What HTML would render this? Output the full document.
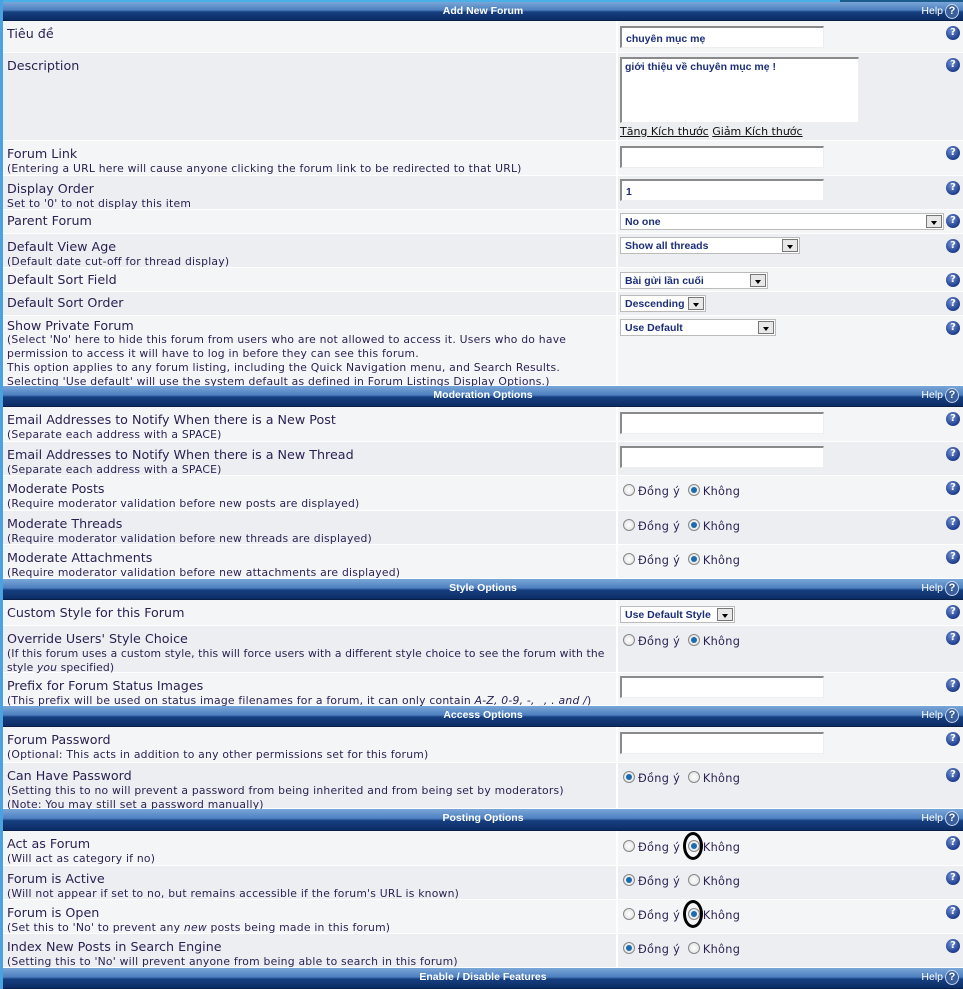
<!DOCTYPE html>
<html><head><meta charset="utf-8"><style>
*{margin:0;padding:0;box-sizing:border-box}
body{width:963px;height:989px;position:relative;overflow:hidden;background:#fff;font-family:"DejaVu Sans","Liberation Sans",sans-serif;color:#2a1f50}
.edge{position:absolute;left:0;top:0;width:3px;height:989px;background:#4aa3e0}
.topb{position:absolute;left:0;top:0;width:963px;height:3px;background:#4ab0e8}
.topd{position:absolute;left:840px;top:0;width:123px;height:3px;background:#1b5c8c}
.h{position:absolute;left:3px;width:960px;background:linear-gradient(#7aa7d8,#4e7fbf 45%,#163f80 55%,#0c2d66);border-bottom:1px solid #0a1f45;color:#fff;font-weight:bold;font-size:10.5px;font-family:"Liberation Sans",sans-serif;text-align:center;line-height:19px}
.h .hp{position:absolute;right:4px;top:0;font-weight:normal;font-size:10.5px}
.h .hp i{display:inline-block;width:14px;height:15px;border-radius:50%;background:#3a5f9c;border:1px solid #c5d6ee;vertical-align:middle;color:#fff;font-style:normal;font-weight:bold;font-size:11px;line-height:13px;text-align:center;margin-left:2px}
.r{position:absolute;left:3px;width:960px;border-bottom:1px solid #fff}
.a{background:#f4f5f7}.b{background:#eceef1}
.r .sep{position:absolute;left:613px;top:0;bottom:0;width:2px;background:#fff}
.t{position:absolute;left:4px;top:6px;font-size:12.7px;line-height:14px;white-space:nowrap}
.s{font-size:10.8px;line-height:12px;letter-spacing:.22px}
.q{position:absolute;left:943px;top:5px;width:14px;height:14px;border-radius:50%;background:radial-gradient(circle at 40% 35%,#6f8fd0,#1e3d8e 70%);color:#fff;font-size:10px;font-weight:bold;text-align:center;line-height:14px}
.in{position:absolute;left:617px;top:5px;width:204px;height:22px;background:#fff;border-top:2px solid #8a8a8a;border-left:2px solid #8a8a8a;border-right:1px solid #eee;border-bottom:1px solid #eee;font-size:10.5px;font-family:"Liberation Sans",sans-serif;font-weight:bold;color:#1c2e78;padding:5px 4px}
.sel{position:absolute;left:617px;top:4px;height:17px;background:#fff;border:1px solid #bbb;font-size:10.5px;font-family:"Liberation Sans",sans-serif;font-weight:bold;color:#1c2e78;padding:2px 4px;line-height:12px;white-space:nowrap}
.sel b{position:absolute;right:1px;top:1px;width:16px;height:13px;background:#e8e8e8;border:1px solid #777}
.sel b:after{content:"";position:absolute;left:4px;top:5px;border:3px solid transparent;border-top:4px solid #000}
.rad{position:absolute;left:620px;top:8px;font-size:11.3px;white-space:nowrap;color:#2a1f50;letter-spacing:.3px}
.rd{display:inline-block;width:12px;height:12px;border-radius:50%;border:1px solid #888;background:radial-gradient(#fff,#ddd);vertical-align:-1px;margin-right:3px;position:relative}
.rd.on:after{content:"";position:absolute;left:2px;top:2px;width:6px;height:6px;border-radius:50%;background:#1a6bb0}
.ell{position:absolute;width:20px;height:28px;border:3px solid #000;border-radius:50%}
.lk{position:absolute;left:617px;top:72px;font-size:11px;font-family:"DejaVu Sans",sans-serif;color:#111;white-space:nowrap}
.lk span{text-decoration:underline}
</style></head><body>
<div class="topb"></div><div class="topd"></div>

<div class="h" style="top:2px;height:19px">Add New Forum<span class="hp">Help<i>?</i></span></div>

<div class="r a" style="top:21px;height:32px"><div class="sep"></div><div class="t">Tiêu đề</div><div class="in" style="top:5px">chuyên mục mẹ</div><div class="q">?</div></div>
<div class="r b" style="top:53px;height:88px"><div class="sep"></div><div class="t">Description</div>
<div class="in" style="top:4px;width:239px;height:66px;padding:2px 3px">giới thiệu về chuyên mục mẹ !</div>
<div class="lk"><span>Tăng Kích thước</span> <span>Giảm Kích thước</span></div><div class="q">?</div></div>
<div class="r a" style="top:141px;height:35px"><div class="sep"></div><div class="t">Forum Link<br><span class="s">(Entering a URL here will cause anyone clicking the forum link to be redirected to that URL)</span></div><div class="in"></div><div class="q">?</div></div>
<div class="r b" style="top:176px;height:34px"><div class="sep"></div><div class="t">Display Order<br><span class="s">Set to '0' to not display this item</span></div><div class="in" style="top:3px">1</div><div class="q">?</div></div>
<div class="r a" style="top:210px;height:24px"><div class="sep"></div><div class="t" style="top:4px">Parent Forum</div><div class="sel" style="width:324px;top:3px">No one<b></b></div><div class="q" style="top:4px">?</div></div>
<div class="r b" style="top:234px;height:34px"><div class="sep"></div><div class="t">Default View Age<br><span class="s">(Default date cut-off for thread display)</span></div><div class="sel" style="width:180px;top:3px">Show all threads<b></b></div><div class="q">?</div></div>
<div class="r a" style="top:268px;height:24px"><div class="sep"></div><div class="t" style="top:5px">Default Sort Field</div><div class="sel" style="width:148px;top:4px">Bài gửi lần cuối<b></b></div><div class="q">?</div></div>
<div class="r b" style="top:292px;height:24px"><div class="sep"></div><div class="t" style="top:4px">Default Sort Order</div><div class="sel" style="width:86px;top:3px">Descending<b></b></div><div class="q">?</div></div>
<div class="r a" style="top:316px;height:70px"><div class="sep"></div><div class="t" style="top:3px;line-height:13px">Show Private Forum<br><span class="s">(Select 'No' here to hide this forum from users who are not allowed to access it. Users who do have<br>permission to access it will have to log in before they can see this forum.<br>This option applies to any forum listing, including the Quick Navigation menu, and Search Results.<br>Selecting 'Use default' will use the system default as defined in Forum Listings Display Options.)</span></div><div class="sel" style="width:156px;top:3px">Use Default<b></b></div><div class="q">?</div></div>

<div class="h" style="top:386px;height:21px">Moderation Options<span class="hp">Help<i>?</i></span></div>

<div class="r a" style="top:407px;height:35px"><div class="sep"></div><div class="t">Email Addresses to Notify When there is a New Post<br><span class="s">(Separate each address with a SPACE)</span></div><div class="in"></div><div class="q">?</div></div>
<div class="r b" style="top:442px;height:34px"><div class="sep"></div><div class="t">Email Addresses to Notify When there is a New Thread<br><span class="s">(Separate each address with a SPACE)</span></div><div class="in" style="top:4px"></div><div class="q">?</div></div>
<div class="r a" style="top:476px;height:35px"><div class="sep"></div><div class="t">Moderate Posts<br><span class="s">(Require moderator validation before new posts are displayed)</span></div><div class="rad"><span class="rd"></span>Đồng ý &nbsp;<span class="rd on"></span>Không</div><div class="q">?</div></div>
<div class="r b" style="top:511px;height:34px"><div class="sep"></div><div class="t">Moderate Threads<br><span class="s">(Require moderator validation before new threads are displayed)</span></div><div class="rad"><span class="rd"></span>Đồng ý &nbsp;<span class="rd on"></span>Không</div><div class="q">?</div></div>
<div class="r a" style="top:545px;height:34px"><div class="sep"></div><div class="t">Moderate Attachments<br><span class="s">(Require moderator validation before new attachments are displayed)</span></div><div class="rad"><span class="rd"></span>Đồng ý &nbsp;<span class="rd on"></span>Không</div><div class="q">?</div></div>

<div class="h" style="top:579px;height:21px">Style Options<span class="hp">Help<i>?</i></span></div>

<div class="r a" style="top:600px;height:26px"><div class="sep"></div><div class="t" style="top:6px">Custom Style for this Forum</div><div class="sel" style="width:115px;top:6px">Use Default Style<b></b></div><div class="q">?</div></div>
<div class="r b" style="top:626px;height:47px"><div class="sep"></div><div class="t">Override Users' Style Choice<br><span class="s" style="letter-spacing:.1px">(If this forum uses a custom style, this will force users with a different style choice to see the forum with the<br>style <i>you</i> specified)</span></div><div class="rad"><span class="rd"></span>Đồng ý &nbsp;<span class="rd on"></span>Không</div><div class="q">?</div></div>
<div class="r a" style="top:673px;height:33px"><div class="sep"></div><div class="t">Prefix for Forum Status Images<br><span class="s">(This prefix will be used on status image filenames for a forum, it can only contain <i>A-Z, 0-9, -, _, . and /</i>)</span></div><div class="in" style="top:3px"></div><div class="q">?</div></div>

<div class="h" style="top:706px;height:21px">Access Options<span class="hp">Help<i>?</i></span></div>

<div class="r a" style="top:727px;height:36px"><div class="sep"></div><div class="t">Forum Password<br><span class="s">(Optional: This acts in addition to any other permissions set for this forum)</span></div><div class="in"></div><div class="q">?</div></div>
<div class="r b" style="top:763px;height:46px"><div class="sep"></div><div class="t">Can Have Password<br><span class="s">(Setting this to no will prevent a password from being inherited and from being set by moderators)<br>(Note: You may still set a password manually)</span></div><div class="rad"><span class="rd on"></span>Đồng ý &nbsp;<span class="rd"></span>Không</div><div class="q">?</div></div>

<div class="h" style="top:809px;height:22px">Posting Options<span class="hp">Help<i>?</i></span></div>

<div class="r a" style="top:831px;height:35px"><div class="sep"></div><div class="t">Act as Forum<br><span class="s">(Will act as category if no)</span></div><div class="rad" style="top:9px"><span class="rd"></span>Đồng ý &nbsp;<span class="rd on"></span>Không</div><div class="q">?</div></div>
<div class="r b" style="top:866px;height:34px"><div class="sep"></div><div class="t">Forum is Active<br><span class="s">(Will not appear if set to no, but remains accessible if the forum's URL is known)</span></div><div class="rad"><span class="rd on"></span>Đồng ý &nbsp;<span class="rd"></span>Không</div><div class="q">?</div></div>
<div class="r a" style="top:900px;height:34px"><div class="sep"></div><div class="t">Forum is Open<br><span class="s">(Set this to 'No' to prevent any <i>new</i> posts being made in this forum)</span></div><div class="rad"><span class="rd"></span>Đồng ý &nbsp;<span class="rd on"></span>Không</div><div class="q">?</div></div>
<div class="r b" style="top:934px;height:34px"><div class="sep"></div><div class="t">Index New Posts in Search Engine<br><span class="s">(Setting this to 'No' will prevent anyone from being able to search in this forum)</span></div><div class="rad"><span class="rd on"></span>Đồng ý &nbsp;<span class="rd"></span>Không</div><div class="q">?</div></div>

<div class="h" style="top:968px;height:21px">Enable / Disable Features<span class="hp">Help<i>?</i></span></div>

<div class="ell" style="left:683px;top:832px"></div>
<div class="ell" style="left:683px;top:900px"></div>
<div class="edge"></div>
</body></html>
